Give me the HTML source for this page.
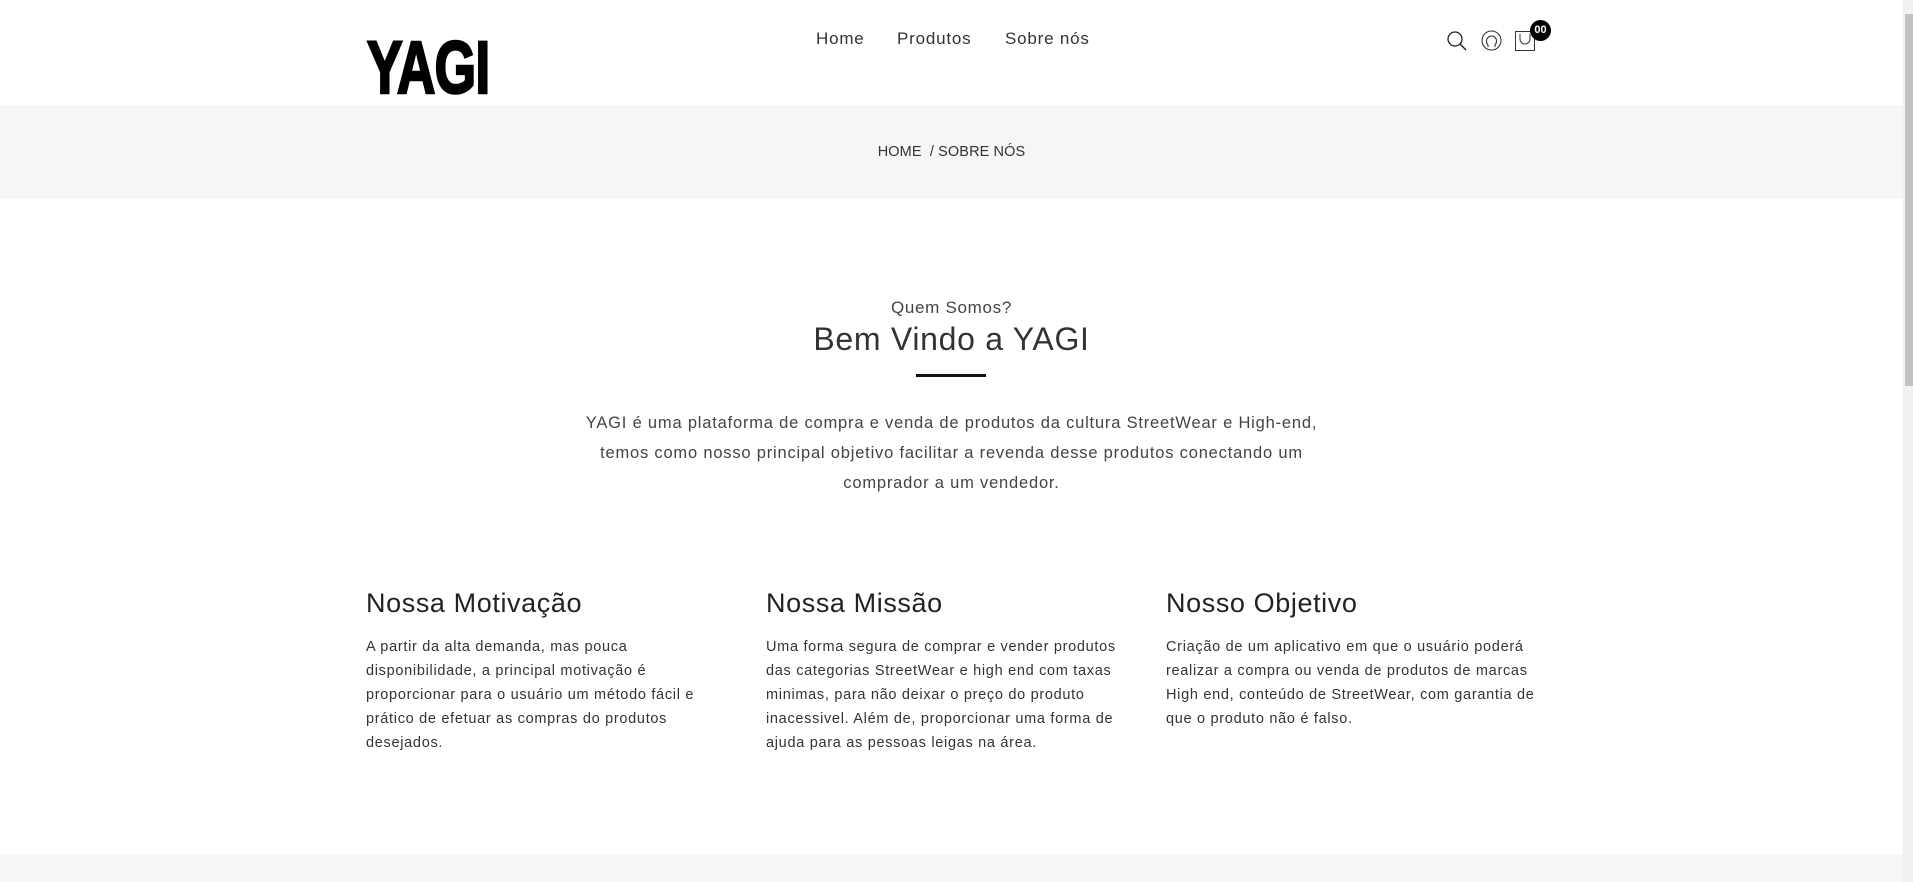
<!DOCTYPE html>
<html><head><meta charset="utf-8"><style>
*{margin:0;padding:0;box-sizing:border-box}
body{width:1913px;height:882px;overflow:hidden;background:#fff;font-family:"Liberation Sans",sans-serif;color:#333;position:relative}
.abs{position:absolute}
.logo{left:367px;top:32px;font-family:"Liberation Sans",sans-serif;font-weight:bold;font-size:74px;line-height:72px;color:#000;transform:scaleX(0.72);transform-origin:left;letter-spacing:-1px;-webkit-text-stroke:2.5px #000}
.nav{top:29px;font-size:17px;color:#333;letter-spacing:0.8px}
.crumb{left:0;width:1903px;height:94px;top:105px;background:#f6f6f6}
.c{left:0;width:1903px;text-align:center}
.col h3{font-size:27px;font-weight:normal;color:#222;letter-spacing:0.6px}
.col p{font-size:14.5px;line-height:24px;color:#333;margin-top:16px;letter-spacing:0.7px;white-space:nowrap}
.sb{left:1903px;top:0;width:10px;height:882px;background:#f1f1f1}
</style></head><body>
<div class="abs logo">YAGI</div>
<div class="abs nav" style="left:816px">Home</div>
<div class="abs nav" style="left:897px">Produtos</div>
<div class="abs nav" style="left:1005px">Sobre nós</div>
<svg class="abs" style="left:1446px;top:30px" width="22" height="22" viewBox="0 0 22 22"><circle cx="9" cy="9" r="7" fill="none" stroke="#222" stroke-width="1.3"/><path d="M14 14l6 6" stroke="#222" stroke-width="1.5"/></svg>
<svg class="abs" style="left:1481px;top:30px" width="21" height="21" viewBox="0 0 21 21"><circle cx="10.5" cy="10.5" r="9.5" fill="none" stroke="#333" stroke-width="1.1"/><path d="M7 17v-2c-1-1-1.5-2-1.5-4a5 5 0 0 1 10 0c0 2-.5 3-1.5 4v2" fill="none" stroke="#333" stroke-width="1.1"/></svg>
<svg class="abs" style="left:1515px;top:31px" width="21" height="20" viewBox="0 0 21 20"><rect x="0.5" y="0.5" width="19" height="19" fill="none" stroke="#333" stroke-width="1"/><path d="M5 3v5a5 5 0 0 0 10 0V3" fill="none" stroke="#333" stroke-width="1"/></svg>
<div class="abs" style="left:1530px;top:20px;width:21px;height:21px;border-radius:50%;background:#000;color:#fff;font-size:11px;font-weight:bold;text-align:center;line-height:21px">00</div>
<div class="abs crumb"></div>
<div class="abs c" style="top:144px;font-size:14.5px;color:#333;letter-spacing:0.1px">HOME &nbsp;/&nbsp;SOBRE NÓS</div>
<div class="abs c" style="top:298px;font-size:17px;color:#444;letter-spacing:0.7px">Quem Somos?</div>
<div class="abs c" style="top:321px;font-size:32px;color:#333;letter-spacing:0.7px">Bem Vindo a YAGI</div>
<div class="abs" style="left:916px;top:374px;width:70px;height:3px;background:#111"></div>
<div class="abs c" style="top:408px;font-size:16.5px;line-height:30px;color:#444;letter-spacing:0.8px">YAGI é uma plataforma de compra e venda de produtos da cultura StreetWear e High-end,<br>temos como nosso principal objetivo facilitar a revenda desse produtos conectando um<br>comprador a um vendedor.</div>
<div class="abs col" style="left:366px;top:588px"><h3>Nossa Motivação</h3><p>A partir da alta demanda, mas pouca<br>disponibilidade, a principal motivação é<br>proporcionar para o usuário um método fácil e<br>prático de efetuar as compras do produtos<br>desejados.</p></div>
<div class="abs col" style="left:766px;top:588px"><h3>Nossa Missão</h3><p>Uma forma segura de comprar e vender produtos<br>das categorias StreetWear e high end com taxas<br>minimas, para não deixar o preço do produto<br>inacessivel. Além de, proporcionar uma forma de<br>ajuda para as pessoas leigas na área.</p></div>
<div class="abs col" style="left:1166px;top:588px"><h3>Nosso Objetivo</h3><p>Criação de um aplicativo em que o usuário poderá<br>realizar a compra ou venda de produtos de marcas<br>High end, conteúdo de StreetWear, com garantia de<br>que o produto não é falso.</p></div>
<div class="abs" style="left:0;top:855px;width:1903px;height:27px;background:#f6f6f6"></div>
<div class="abs sb"></div>
<div class="abs" style="left:1905px;top:14px;width:8px;height:372px;background:#c1c1c1"></div>
</body></html>
